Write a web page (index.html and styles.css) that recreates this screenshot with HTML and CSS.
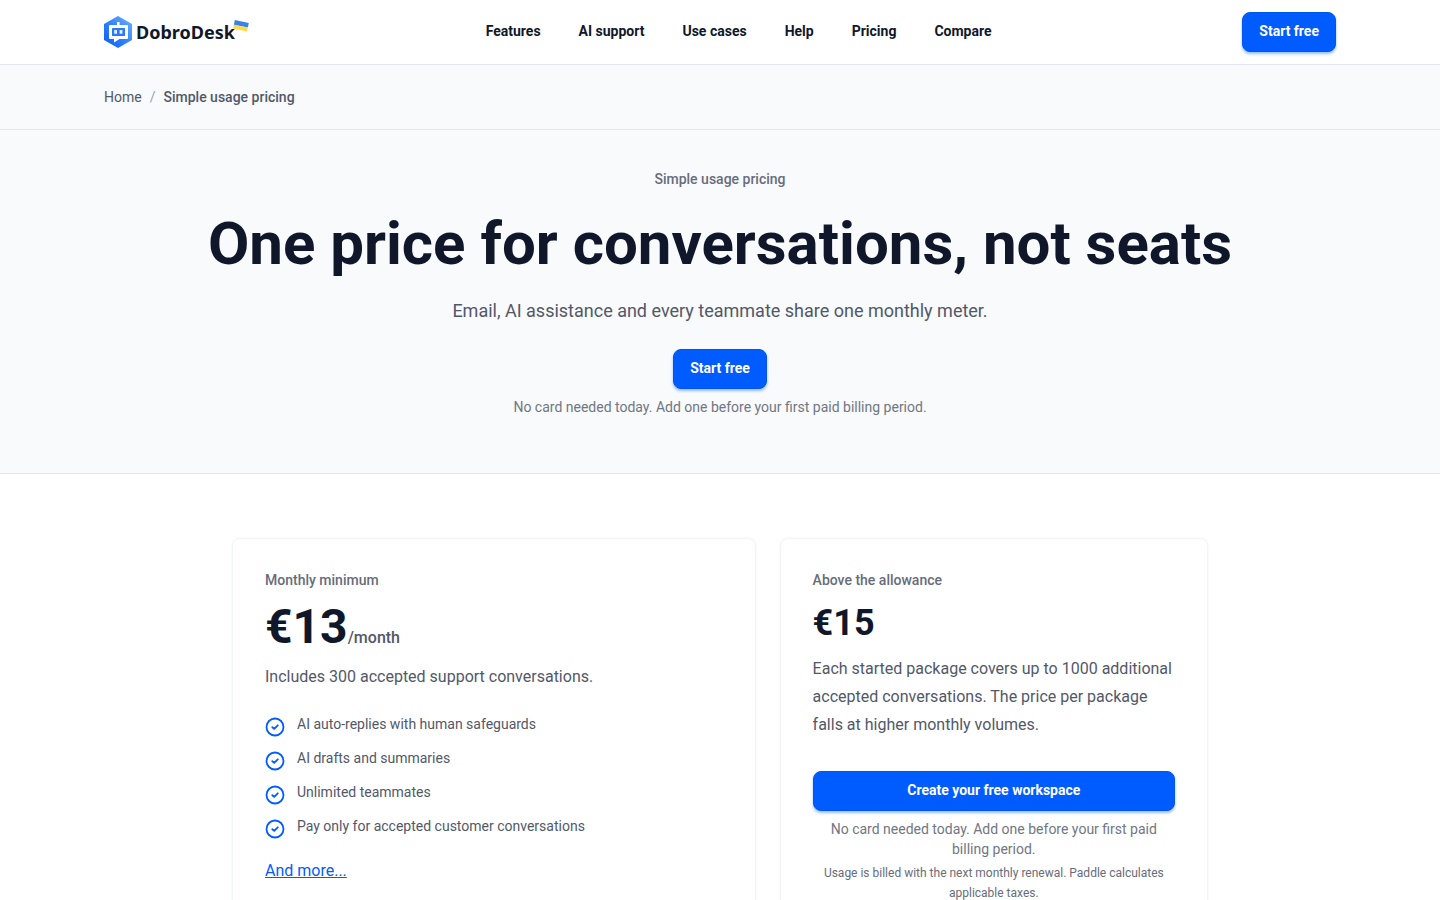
FILE: index.html
```html
<!DOCTYPE html>
<html lang="en">
<head>
  <meta charset="UTF-8">
  <meta name="viewport" content="width=device-width, initial-scale=1">
  <title>Simple usage pricing | DobroDesk</title>
  <link rel="stylesheet" href="styles.css">
</head>
<body>
  <header class="site-header">
    <div class="container header-inner">
      <a class="logo" href="#">
        <svg class="logo-mark" viewBox="0 0 28 32" aria-hidden="true">
          <defs>
            <linearGradient id="mark" x1="1" y1="0" x2="0" y2="1">
              <stop offset="0" stop-color="#6db4ff"/>
              <stop offset="0.5" stop-color="#3283fb"/>
              <stop offset="1" stop-color="#0559fb"/>
            </linearGradient>
          </defs>
          <path d="M14 0 L28 8 V24 L14 32 L0 24 V8 Z" fill="url(#mark)"/>
          <path d="M13 6h2.6v3H23a1 1 0 0 1 1 1v12a1 1 0 0 1-1 1h-7.5L10 26.5V23H6a1 1 0 0 1-1-1V10a1 1 0 0 1 1-1h7z" fill="#fff"/>
          <rect x="8" y="12" width="13" height="8" rx="0.6" fill="#287afb"/>
          <path d="M10.2 14h2.8v3.8h-2.8z M15.6 14h2.8v3.8h-2.8z" fill="#e4f0ff"/>
        </svg>
        <span class="logo-name">DobroDesk</span>
        <svg class="flag" viewBox="0 0 16 12" aria-hidden="true">
          <path d="M1.8 0 L15.8 3 L14.8 7.4 L0.9 4.8 Z" fill="#3685e6"/>
          <path d="M0.9 4.8 L14.8 7.4 L13.8 11.6 L0 8.6 Z" fill="#ffda4b"/>
        </svg>
      </a>
      <nav class="main-nav" aria-label="Main">
        <a href="#">Features</a>
        <a href="#">AI support</a>
        <a href="#">Use cases</a>
        <a href="#">Help</a>
        <a href="#">Pricing</a>
        <a href="#">Compare</a>
      </nav>
      <a class="btn" href="#">Start free</a>
    </div>
  </header>

  <nav class="breadcrumbs" aria-label="Breadcrumb">
    <ol class="container">
      <li><a href="#">Home</a></li>
      <li class="separator" aria-hidden="true">/</li>
      <li class="current" aria-current="page">Simple usage pricing</li>
    </ol>
  </nav>

  <main>
    <section class="hero">
      <p class="eyebrow">Simple usage pricing</p>
      <h1>One price for conversations, not seats</h1>
      <p class="lead">Email, AI assistance and every teammate share one monthly meter.</p>
      <a class="btn" href="#">Start free</a>
      <p class="note">No card needed today. Add one before your first paid billing period.</p>
    </section>

    <section class="plans">
      <article class="card">
        <h2 class="eyebrow">Monthly minimum</h2>
        <p class="price price-main">€13<span class="period">/month</span></p>
        <p class="card-text">Includes 300 accepted support conversations.</p>
        <ul class="features">
          <li>
            <svg class="check" viewBox="0 0 20 20" aria-hidden="true"><circle cx="10" cy="10" r="8.5"/><path d="M7.3 10.2 L9.2 11.8 L12.8 8.3"/></svg>
            AI auto-replies with human safeguards
          </li>
          <li>
            <svg class="check" viewBox="0 0 20 20" aria-hidden="true"><circle cx="10" cy="10" r="8.5"/><path d="M7.3 10.2 L9.2 11.8 L12.8 8.3"/></svg>
            AI drafts and summaries
          </li>
          <li>
            <svg class="check" viewBox="0 0 20 20" aria-hidden="true"><circle cx="10" cy="10" r="8.5"/><path d="M7.3 10.2 L9.2 11.8 L12.8 8.3"/></svg>
            Unlimited teammates
          </li>
          <li>
            <svg class="check" viewBox="0 0 20 20" aria-hidden="true"><circle cx="10" cy="10" r="8.5"/><path d="M7.3 10.2 L9.2 11.8 L12.8 8.3"/></svg>
            Pay only for accepted customer conversations
          </li>
        </ul>
        <a class="more" href="#">And more...</a>
      </article>

      <article class="card">
        <h2 class="eyebrow">Above the allowance</h2>
        <p class="price">€15</p>
        <p class="card-text">Each started package covers up to 1000 additional accepted conversations. The price per package falls at higher monthly volumes.</p>
        <a class="btn btn-block" href="#">Create your free workspace</a>
        <p class="note">No card needed today. Add one before your first paid billing period.</p>
        <p class="small-note">Usage is billed with the next monthly renewal. Paddle calculates applicable taxes.</p>
      </article>
    </section>
  </main>
</body>
</html>
```

FILE: styles.css
```css
* {
  box-sizing: border-box;
}
body {
  margin: 0;
  font-family: Roboto, sans-serif;
  font-size: 16px;
  line-height: 24px;
  color: #525869;
  background: #fff;
}
h1, h2, p, ul, ol {
  margin: 0;
  padding: 0;
}
ul, ol {
  list-style: none;
}
a {
  color: inherit;
  text-decoration: none;
}
.container {
  max-width: 1280px;
  margin: 0 auto;
  padding: 0 24px;
}

/* header */
.site-header {
  border-bottom: 1px solid #e2e6ec;
}
.header-inner {
  display: flex;
  align-items: center;
  justify-content: space-between;
  height: 64px;
}
.logo {
  position: relative;
  display: flex;
  align-items: center;
  gap: 4px;
}
.logo-mark {
  width: 28px;
  height: 32px;
}
.logo-name {
  font-family: "Noto Sans", sans-serif;
  font-size: 18px;
  font-weight: 700;
  line-height: 22px;
  color: #10172a;
}
.flag {
  position: absolute;
  top: 4px;
  right: -14px;
  width: 16px;
  height: 12px;
}
.main-nav {
  display: flex;
  gap: 38px;
  padding-bottom: 2px;
  font-size: 14px;
  font-weight: 700;
  line-height: 20px;
  color: #10172a;
}
.btn {
  display: inline-block;
  padding: 8px 16px 10px;
  border: 1px solid #0055ee;
  border-radius: 8px;
  background: #005cff;
  box-shadow: 0 2px 3px rgba(0, 92, 255, 0.4);
  color: #fff;
  font-size: 14px;
  font-weight: 700;
  line-height: 20px;
  text-align: center;
}
.btn:hover {
  background: #004fdb;
}
.btn-block {
  display: block;
  margin-top: 32px;
}

/* breadcrumbs */
.breadcrumbs {
  background: #f8fafc;
  border-bottom: 1px solid #e2e6ec;
}
.breadcrumbs ol {
  display: flex;
  gap: 8px;
  padding-top: 22px;
  padding-bottom: 22px;
  font-size: 14px;
  line-height: 20px;
}
.separator {
  color: #9ca1ad;
}
.current {
  font-weight: 500;
}

/* hero */
.hero {
  padding: 40px 24px 56px;
  background: #f8fafc;
  border-bottom: 1px solid #e2e6ec;
  text-align: center;
}
.eyebrow {
  font-size: 14px;
  font-weight: 500;
  line-height: 18px;
  color: #676c7b;
}
h1 {
  margin-top: 26px;
  font-size: 60px;
  font-weight: 700;
  line-height: 60px;
  color: #10172a;
}
.lead {
  margin-top: 23px;
  margin-bottom: 24px;
  font-size: 18px;
  line-height: 28px;
}
.note {
  margin-top: 8px;
  font-size: 14px;
  line-height: 20px;
  color: #717684;
}

/* plans */
.plans {
  display: grid;
  grid-template-columns: 11fr 9fr;
  gap: 24px;
  max-width: 1024px;
  margin: 0 auto;
  padding: 64px 24px;
}
.card {
  padding: 32px;
  border: 1px solid #f3f4f6;
  border-radius: 8px;
  box-shadow: 0 0 2px rgba(16, 23, 42, 0.08);
}
.price {
  margin-top: 14px;
  font-size: 36px;
  font-weight: 700;
  line-height: 40px;
  color: #10172a;
}
.price-main {
  font-size: 48px;
  line-height: 48px;
}
.period {
  font-size: 16px;
  font-weight: 500;
  line-height: 16px;
  color: #525869;
}
.card-text {
  margin-top: 12px;
  line-height: 28px;
}
.features {
  display: grid;
  gap: 10px;
  margin-top: 24px;
  font-size: 14px;
  line-height: 18px;
}
.features li {
  display: flex;
  gap: 12px;
  min-height: 24px;
}
.check {
  flex: none;
  width: 20px;
  height: 20px;
  margin-top: 2px;
  fill: none;
  stroke: #005cff;
  stroke-width: 1.8;
  stroke-linecap: round;
  stroke-linejoin: round;
}
.more {
  display: inline-block;
  margin-top: 18px;
  color: #005cff;
  text-decoration: underline;
}
.card .note {
  text-align: center;
}
.small-note {
  margin-top: 4px;
  font-size: 12px;
  line-height: 20px;
  color: #676c7b;
  text-align: center;
}
```
